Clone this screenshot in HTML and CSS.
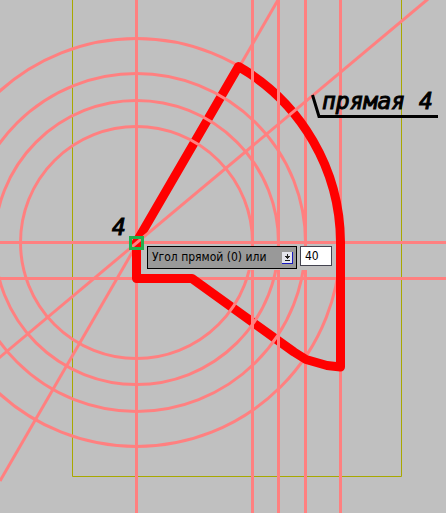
FILE: index.html
```html
<!DOCTYPE html>
<html lang="ru">
<head>
    <meta charset="UTF-8">
    <meta name="viewport" content="width=device-width, initial-scale=1.0">
    <title>Чертёж</title>
    <link rel="stylesheet" href="styles.css">
</head>
<body>
    <main class="drawing">
        <svg class="canvas" aria-label="Чертёж">
            <!-- sheet limits -->
            <path class="sheet" d="M72.500 -1V476.500H401.500V-1" />

            <!-- construction lines under the contour -->
            <g class="guide">
                <path d="M136.500 0V2000M305.500 0V2000M340.500 0V2000" />
                <path d="M0 242.500H2000M0 278.500H2000" />
                <path d="M0 481L278 0" />
                <circle cx="136.500" cy="242.500" r="204" />
            </g>

            <path class="contour" d="M136.500 242L238.500 66.500A204 204 0 0 1 340.500 242V367L327 365.500L306 359.500L294 352L192 278.500H136.500Z" />

            <!-- construction lines over the contour -->
            <g class="guide">
                <path d="M252.500 0V2000M278.500 0V2000" />
                <path d="M-1 358L428 -1" />
                <circle cx="136.500" cy="242.500" r="116" />
                <circle cx="136.500" cy="242.500" r="142" />
                <circle cx="136.500" cy="242.500" r="169" />
            </g>

            <rect class="snap" x="130.500" y="237.500" width="12" height="11" />

            <path class="leader" d="M312.500 95L319 116.500H438" />
            <text class="label" x="322" y="109">прямая 4</text>
            <text class="label" x="112" y="235">4</text>
        </svg>

        <form class="prompt">
            <div class="prompt-box">
                <label for="angle">Угол прямой (0) или</label>
                <button class="options" type="button" aria-label="Параметры">
                    <svg width="11" height="12" viewBox="0 0 11 12">
                        <rect x="0" y="0" width="11" height="12" fill="#1818c0" />
                        <rect x="0" y="0" width="10" height="11" fill="#e4e4ec" />
                        <path d="M5 2h1v2h2v1h-1v1h-1v1h-1v-1h-1v-1h-1v-1h2zM3 8h5v1h-5z" fill="#222" />
                    </svg>
                </button>
            </div>
            <input class="angle" id="angle" type="text" value="40">
        </form>
    </main>
</body>
</html>
```

FILE: styles.css
```css
body {
    margin: 0;
    background-color: #c0c0c0;
}

.drawing {
    position: relative;
    height: 100vh;
    overflow: hidden;
}

.canvas {
    display: block;
    width: 100%;
    height: 100%;
}

.sheet {
    fill: none;
    stroke: #a8a800;
    stroke-width: 1px;
}

.guide {
    fill: none;
    stroke: #ff8080;
    stroke-width: 3px;
}

.contour {
    fill: none;
    stroke: #ff0000;
    stroke-width: 9px;
    stroke-linejoin: round;
}

.snap {
    fill: none;
    stroke: #22b14c;
    stroke-width: 3px;
}

.leader {
    fill: none;
    stroke: #000;
    stroke-width: 3px;
}

.label {
    font-family: "DejaVu Sans Mono", monospace;
    font-size: 23px;
    font-style: italic;
    stroke: #000;
    stroke-width: 1px;
}

/* dynamic input beside the cursor */
.prompt {
    position: absolute;
    left: 147px;
    top: 246px;
    display: flex;
    align-items: flex-start;
    gap: 3px;
    padding-bottom: 1px;
    background-color: #c0c0c0;
    font-family: "DejaVu Sans Condensed", "DejaVu Sans", sans-serif;
    font-size: 12px;
}

.prompt-box {
    display: flex;
    align-items: center;
    justify-content: space-between;
    box-sizing: border-box;
    width: 150px;
    height: 23px;
    padding: 0 3px 2px 4px;
    border: 1px solid #000;
    background-color: #999;
    white-space: nowrap;
}

.options {
    display: flex;
    padding: 2px 0 0;
    border: 0;
    background: none;
}

.angle {
    box-sizing: border-box;
    width: 32px;
    height: 20px;
    padding: 0 4px;
    border: 1px solid #444450;
    background-color: #fff;
    color: #000;
    font: inherit;
}
```
